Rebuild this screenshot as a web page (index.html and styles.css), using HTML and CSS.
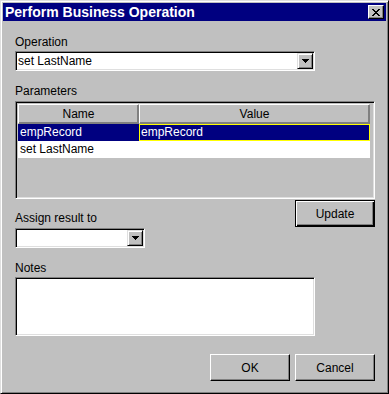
FILE: index.html
```html
<!DOCTYPE html>
<html lang="en">

<head>
    <meta charset="UTF-8">
    <meta name="viewport" content="width=device-width, initial-scale=1.0">
    <title>Perform Business Operation</title>
    <link rel="stylesheet" href="styles.css">
</head>

<body>
    <div class="window">
        <div class="titlebar">
            <span class="title">Perform Business Operation</span>
            <span class="close-button">
                <svg width="8" height="7" viewBox="0 0 8 7">
                    <path d="M0 0h2v1H0z M6 0h2v1H6z M1 1h2v1H1z M5 1h2v1H5z M2 2h4v1H2z M3 3h2v1H3z M2 4h4v1H2z M1 5h2v1H1z M5 5h2v1H5z M0 6h2v1H0z M6 6h2v1H6z" fill="#000" />
                </svg>
            </span>
        </div>

        <div class="content">
            <div class="label label-operation">Operation</div>
            <div class="combo combo-wide">
                <span class="combo-text">set LastName</span>
                <span class="combo-arrow">
                    <svg width="7" height="4" viewBox="0 0 7 4">
                        <path d="M0 0h7v1H0z M1 1h5v1H1z M2 2h3v1H2z M3 3h1v1H3z" fill="#000" />
                    </svg>
                </span>
            </div>

            <div class="label label-params">Parameters</div>
            <div class="table-box">
                <div class="table-row">
                    <div class="th col-name">Name</div>
                    <div class="th col-value">Value</div>
                </div>
                <div class="table-row selected">
                    <div class="td col-name">empRecord</div>
                    <div class="td col-value editing">empRecord</div>
                </div>
                <div class="table-row">
                    <div class="td col-name">set LastName</div>
                    <div class="td col-value"></div>
                </div>
            </div>

            <div class="assign-row">
                <div class="assign-col">
                    <div class="label label-assign">Assign result to</div>
                    <div class="combo combo-small">
                        <span class="combo-text"></span>
                        <span class="combo-arrow">
                            <svg width="7" height="4" viewBox="0 0 7 4">
                                <path d="M0 0h7v1H0z M1 1h5v1H1z M2 2h3v1H2z M3 3h1v1H3z" fill="#000" />
                            </svg>
                        </span>
                    </div>
                </div>
                <button class="btn btn-default">Update</button>
            </div>

            <div class="label label-notes">Notes</div>
            <div class="notes"></div>

            <div class="actions">
                <button class="btn">OK</button>
                <button class="btn">Cancel</button>
            </div>
        </div>
    </div>
</body>

</html>
```

FILE: styles.css
```css
body {
    margin: 0;
    background-color: #c0c0c0;
    font-family: 'Liberation Sans', Arial, sans-serif;
    font-size: 12px;
    color: #000;
}

/* Dialog frame */
.window {
    box-sizing: border-box;
    width: 389px;
    height: 394px;
    padding: 2px;
    background-color: #c0c0c0;
    border: 1px solid;
    border-color: #dfdfdf #000 #000 #dfdfdf;
    box-shadow: inset 1px 1px #fff, inset -1px -1px #808080;
}

.titlebar {
    display: flex;
    align-items: center;
    justify-content: space-between;
    height: 18px;
    background-color: #000080;
    color: #fff;
}

.title {
    padding-left: 2px;
    font-size: 14px;
    font-weight: bold;
    line-height: 18px;
}

.close-button {
    box-sizing: border-box;
    display: flex;
    align-items: center;
    justify-content: center;
    width: 16px;
    height: 14px;
    margin-right: 2px;
    padding-top: 1px;
    background-color: #c0c0c0;
    border: 1px solid;
    border-color: #fff #000 #000 #fff;
    box-shadow: inset -1px -1px #808080;
}

.content {
    padding: 0 11px 0 12px;
}

.label {
    line-height: 14px;
    height: 14px;
}

.label-operation {
    margin-top: 14px;
}

.label-params {
    margin-top: 13px;
}

.label-assign {
    margin-top: 11px;
}

.label-notes {
    margin-top: 13px;
}

/* Sunken fields */
.combo,
.notes,
.table-box {
    box-sizing: border-box;
    border: 1px solid;
    border-color: #808080 #fff #fff #808080;
    box-shadow: inset 1px 1px #000, inset -1px -1px #dfdfdf;
}

.combo {
    display: flex;
    align-items: stretch;
    height: 20px;
    padding: 1px;
    background-color: #fff;
}

.combo-wide {
    width: 300px;
    margin-top: 2px;
}

.combo-small {
    width: 130px;
    margin-top: 3px;
}

.combo-text {
    flex: 1;
    padding-left: 1px;
    line-height: 16px;
}

.combo-arrow {
    box-sizing: border-box;
    display: flex;
    align-items: center;
    justify-content: center;
    width: 16px;
    background-color: #c0c0c0;
    border: 1px solid;
    border-color: #dfdfdf #000 #000 #dfdfdf;
    box-shadow: inset 1px 1px #fff, inset -1px -1px #808080;
}

/* Parameters table */
.table-box {
    width: 360px;
    height: 98px;
    margin-top: 3px;
    padding: 2px;
    background-color: #c0c0c0;
}

.table-row {
    display: flex;
}

.col-name {
    width: 121px;
}

.col-value {
    width: 231px;
}

.th {
    box-sizing: border-box;
    height: 20px;
    line-height: 18px;
    text-align: center;
    border: 1px solid;
    border-color: #fff #808080 #808080 #fff;
    box-shadow: inset -1px -1px #808080;
}

.td {
    box-sizing: border-box;
    height: 17px;
    line-height: 17px;
    padding-left: 2px;
    background-color: #fff;
    white-space: nowrap;
}

.selected .td {
    background-color: #000080;
    color: #fff;
}

.td.editing {
    padding-left: 1px;
    line-height: 15px;
    border: 1px solid #ff0;
}

.assign-row {
    display: flex;
    justify-content: space-between;
    align-items: flex-start;
    width: 360px;
    margin-top: 1px;
}

.notes {
    width: 300px;
    height: 59px;
    margin-top: 2px;
    background-color: #fff;
}

/* Buttons */
.btn {
    box-sizing: border-box;
    width: 80px;
    height: 27px;
    padding: 0;
    font-family: 'Liberation Sans', Arial, sans-serif;
    font-size: 12px;
    color: #000;
    background-color: #c0c0c0;
    border: 1px solid;
    border-color: #fff #000 #000 #fff;
    box-shadow: inset -1px -1px #808080;
}

.btn-default {
    border-color: #000;
    box-shadow: inset 1px 1px #fff, inset -1px -1px #000, inset -2px -2px #808080;
}

.actions {
    display: flex;
    justify-content: flex-end;
    gap: 5px;
    width: 360px;
    margin-top: 18px;
}
```
